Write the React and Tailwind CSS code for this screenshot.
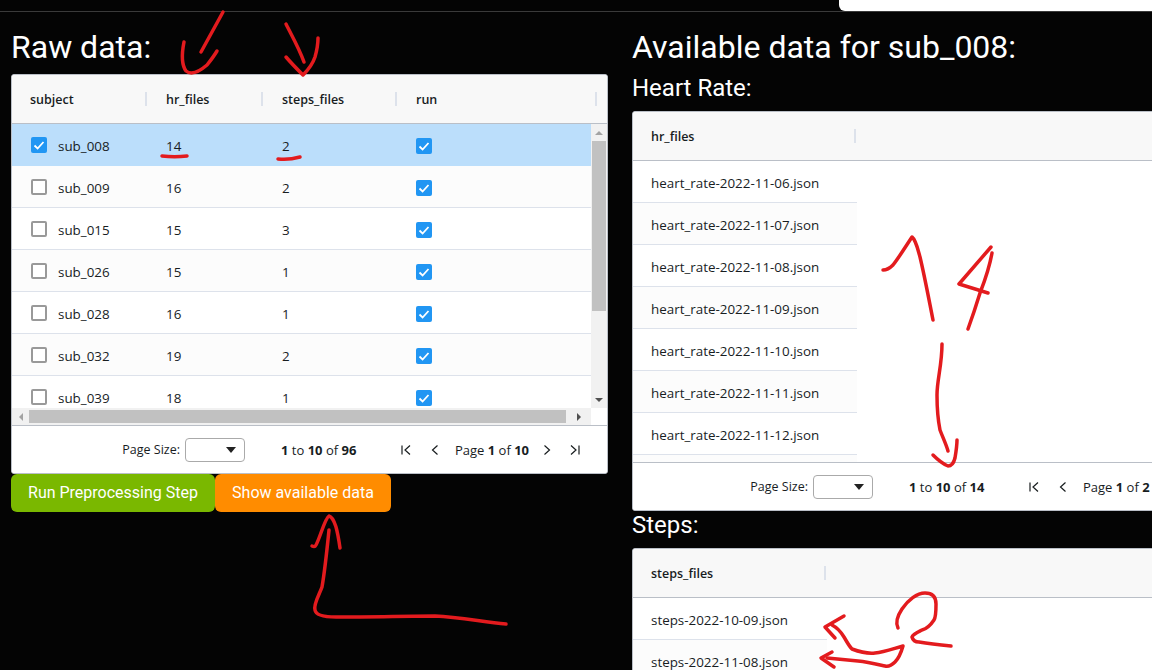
const subjects = [
  ['sub_008', 14, 2],
  ['sub_009', 16, 2],
  ['sub_015', 15, 3],
  ['sub_026', 15, 1],
  ['sub_028', 16, 1],
  ['sub_032', 19, 2],
  ['sub_039', 18, 1],
];

// last row is cut off by the pager, only its background shows
const hrFiles = [...['06', '07', '08', '09', '10', '11', '12'].map((d) => `heart_rate-2022-11-${d}.json`), ''];
const stepFiles = ['steps-2022-10-09.json', 'steps-2022-11-08.json'];

const gridFont = { fontFamily: '"Open Sans", "Noto Sans", sans-serif' };

function Checkbox({ checked }) {
  if (checked) {
    return (
      <div className="w-4 h-4 rounded-[2px] bg-[#2196f3] flex items-center justify-center shrink-0">
        <svg width="12" height="12" viewBox="0 0 12 12" fill="none" stroke="white" strokeWidth="1.8">
          <path d="M1.5 6.5 L4.6 9.5 L10.5 3" />
        </svg>
      </div>
    );
  }
  return <div className="w-4 h-4 rounded-[2px] border-2 border-[#999] bg-white shrink-0" />;
}

function HeaderCell({ width, label }) {
  return (
    <div className={`relative flex items-center pt-[3px] pl-[18px] text-[12.5px] font-semibold text-[#181d1f] h-full shrink-0 ${width}`}>
      {label}
      <div className="absolute right-[1px] top-[17px] w-[2px] h-[14px] bg-[#dde2eb]" />
    </div>
  );
}

function Pager({ total, pages }) {
  return (
    <div className="h-[48px] shrink-0 border-t border-[#babfc7] bg-white flex items-center justify-end pr-[26px] text-[13px] text-[#181d1f]">
      <span className="pt-[2px] text-[12.5px] whitespace-nowrap">Page Size:</span>
      <div className="relative ml-[5px] w-[60px] h-[24px] border border-[#aaa] rounded-[4px] bg-white shrink-0">
        <div className="absolute right-[8px] top-[8px] w-0 h-0 border-l-[5px] border-r-[5px] border-t-[6px] border-l-transparent border-r-transparent border-t-[#222]" />
      </div>
      <span className="pt-[2px] ml-[36px] w-[76px] whitespace-nowrap shrink-0">
        <b>1</b> to <b>10</b> of <b>{total}</b>
      </span>
      <div className="ml-[43px] flex items-center shrink-0">
        <svg width="12" height="12" viewBox="0 0 12 12" fill="none" stroke="#181d1f" strokeWidth="1.2">
          <path d="M2 1.5 V10.5 M10 1.5 L5 6 L10 10.5" />
        </svg>
        <svg className="ml-[17px]" width="12" height="12" viewBox="0 0 12 12" fill="none" stroke="#181d1f" strokeWidth="1.2">
          <path d="M8.5 1.5 L3.5 6 L8.5 10.5" />
        </svg>
        <span className="pt-[2px] ml-[14px] w-[72px] whitespace-nowrap">
          Page <b>1</b> of <b>{pages}</b>
        </span>
        <svg className="ml-[14px]" width="12" height="12" viewBox="0 0 12 12" fill="none" stroke="#181d1f" strokeWidth="1.2">
          <path d="M3.5 1.5 L8.5 6 L3.5 10.5" />
        </svg>
        <svg className="ml-[16px]" width="12" height="12" viewBox="0 0 12 12" fill="none" stroke="#181d1f" strokeWidth="1.2">
          <path d="M2 1.5 L7 6 L2 10.5 M10 1.5 V10.5" />
        </svg>
      </div>
    </div>
  );
}

function RawGrid() {
  return (
    <div className="w-[597px] h-[400px] border border-[#babfc7] rounded-[3px] bg-white flex flex-col overflow-hidden text-[13.4px] text-[#181d1f]" style={gridFont}>
      <div className="h-[49px] shrink-0 bg-[#f8f8f8] border-b border-[#babfc7] flex items-center">
        <HeaderCell width="w-[136px]" label="subject" />
        <HeaderCell width="w-[116px]" label="hr_files" />
        <HeaderCell width="w-[134px]" label="steps_files" />
        <HeaderCell width="w-[200px]" label="run" />
      </div>
      <div className="flex h-[284px] shrink-0">
        <div className="w-[579px] overflow-hidden">
          {subjects.map(([name, hr, steps], i) => (
            <div
              key={name}
              className={`h-[42px] pt-[2px] flex items-center border-b ${i === 0 ? 'bg-[#bbdefb] border-[#bbdefb]' : i % 2 ? 'bg-[#fcfcfc] border-[#dde2eb]' : 'bg-white border-[#dde2eb]'}`}
            >
              <div className="w-[136px] pl-[19px] flex items-center gap-[11px] shrink-0">
                <Checkbox checked={i === 0} />
                <span className="pt-[2px]">{name}</span>
              </div>
              <div className="w-[116px] pl-[18px] pt-[2px] shrink-0">{hr}</div>
              <div className="w-[134px] pl-[18px] pt-[2px] shrink-0">{steps}</div>
              <div className="pl-[18px] shrink-0">
                <Checkbox checked />
              </div>
            </div>
          ))}
        </div>
        <div className="w-[16px] bg-[#f1f1f1] flex flex-col items-center shrink-0">
          <div className="h-[17px] flex items-center justify-center shrink-0">
            <div className="w-0 h-0 border-l-[4px] border-r-[4px] border-b-[4px] border-l-transparent border-r-transparent border-b-[#a3a3a3]" />
          </div>
          <div className="w-[14px] h-[170px] bg-[#c1c1c1]" />
          <div className="mt-auto h-[17px] flex items-center justify-center shrink-0">
            <div className="w-0 h-0 border-l-[4px] border-r-[4px] border-t-[4px] border-l-transparent border-r-transparent border-t-[#505050]" />
          </div>
        </div>
      </div>
      <div className="h-[17px] shrink-0 flex">
        <div className="w-[579px] bg-[#f1f1f1] flex items-center">
          <div className="w-[17px] flex items-center justify-center shrink-0">
            <div className="w-0 h-0 border-t-[4px] border-b-[4px] border-r-[4px] border-t-transparent border-b-transparent border-r-[#a3a3a3]" />
          </div>
          <div className="w-[537px] h-[13px] bg-[#c1c1c1]" />
          <div className="flex-1 flex items-center justify-center">
            <div className="w-0 h-0 border-t-[4px] border-b-[4px] border-l-[4px] border-t-transparent border-b-transparent border-l-[#505050]" />
          </div>
        </div>
      </div>
      <Pager total={96} pages={10} />
    </div>
  );
}

function FileGrid({ column, files, colWidth, height, bodyHeight, pager }) {
  return (
    <div className={`w-[604px] border border-[#babfc7] rounded-[3px] bg-white flex flex-col overflow-hidden text-[13.4px] text-[#181d1f] shrink-0 ${height}`} style={gridFont}>
      <div className="h-[49px] shrink-0 bg-[#f8f8f8] border-b border-[#babfc7] flex items-center">
        <HeaderCell width={colWidth} label={column} />
      </div>
      <div className={`overflow-hidden shrink-0 ${bodyHeight}`}>
        {files.map((file, i) => (
          <div key={i} className={`h-[42px] pt-[4px] flex items-center pl-[18px] border-b border-[#dde2eb] ${colWidth} ${i % 2 ? 'bg-[#fcfcfc]' : 'bg-white'}`}>
            {file}
          </div>
        ))}
      </div>
      {pager}
    </div>
  );
}

function Scribbles() {
  const paths = [
    'M223 12 L201 52',
    'M184 42 C182 52 181 64 186 71 C192 76 200 71 207 65 C211 60 214 56 217 51',
    'M286 24 C292 36 299 48 304 62',
    'M286 57 C292 64 298 70 303 75 C309 69 313 63 315 57 C317 50 318 44 318 38',
    'M162 156 C170 157 179 157 187 156',
    'M278 159 C286 160 293 159 300 157',
    'M506 624 C483 622 460 617 435 616 C410 616 370 617 336 617 C326 617 316 616 315 610 C313 605 320 593 322 587 C325 570 327 550 329 530',
    'M312 546 C314 547 315 547 316 545 C320 538 325 518 329 516 C333 517 335 524 336 527 C338 534 339 541 340 548',
    'M883 270 C887 270 890 268 893 265 C900 256 906 246 912 237 C916 240 918 250 920 257 C925 278 929 300 933 320',
    'M991 247 L959 284 L988 293',
    'M992 253 C989 270 985 280 980 293 C976 306 972 318 968 329',
    'M942 344 C942 365 937 380 937 395 C937 410 938 420 940 430 C943 438 946 444 948 451',
    'M933 455 C938 460 943 464 948 466 C952 466 954 462 955 458 C956 452 957 446 957 440',
    'M898 628 C895 622 898 615 902 609 C908 600 917 593 925 593 C933 593 936 597 936 604 C936 612 936 617 934 620 C930 626 926 629 922 630 C918 632 913 634 912 637 C913 641 916 642 919 642 C930 644 940 645 951 646',
    'M844 616 L825 627 L835 638',
    'M832 625 C838 628 841 632 844 637 C847 642 849 646 852 649 C860 652 867 654 875 653 C885 652 895 648 903 646 C901 653 898 659 895 662 C892 665 889 667 885 666 C876 664 868 662 858 661 C848 660 838 659 827 658',
    'M832 652 L821 658 L834 667',
  ];
  return (
    <svg className="absolute left-0 top-0 pointer-events-none" width="1152" height="670" fill="none" stroke="#e31b1e" strokeWidth="3.5" strokeLinecap="round" strokeLinejoin="round">
      {paths.map((d) => (
        <path key={d} d={d} />
      ))}
    </svg>
  );
}

export default function App() {
  return (
    <div className="relative w-[1152px] h-[670px] overflow-hidden bg-[#040404] text-white" style={{ fontFamily: 'Roboto, sans-serif' }}>
      <div className="h-[12px] border-b border-[#3a3a3a] flex justify-end">
        <div className="w-[313px] h-[11px] bg-white rounded-bl-[6px]" />
      </div>
      <div className="flex pl-[11px] gap-[24px]">
        <div className="w-[597px] shrink-0">
          <h1 className="text-[32px] leading-[36px] mt-[17px] mb-[9px] font-normal">Raw data:</h1>
          <RawGrid />
          <div className="flex">
            <button className="h-[38px] w-[204px] bg-[#7ab800] rounded-[6px] text-[16px] font-normal whitespace-nowrap">Run Preprocessing Step</button>
            <button className="h-[38px] w-[176px] bg-[#ff8c00] rounded-[6px] text-[16px] font-normal whitespace-nowrap">Show available data</button>
          </div>
        </div>
        <div className="flex-1 min-w-0">
          <h1 className="text-[32px] leading-[36px] mt-[17px] font-normal whitespace-nowrap">Available data for sub_008:</h1>
          <h2 className="text-[24px] leading-[28px] mt-[9px] mb-[9px] font-normal">Heart Rate:</h2>
          <FileGrid
            column="hr_files"
            files={hrFiles}
            colWidth="w-[224px]"
            height="h-[400px]"
            bodyHeight="h-[301px]"
            pager={<Pager total={14} pages={2} />}
          />
          <h2 className="text-[24px] leading-[28px] mb-[9px] font-normal">Steps:</h2>
          <FileGrid column="steps_files" files={stepFiles} colWidth="w-[194px]" height="h-[140px]" bodyHeight="h-[90px]" />
        </div>
      </div>
      <Scribbles />
    </div>
  );
}
